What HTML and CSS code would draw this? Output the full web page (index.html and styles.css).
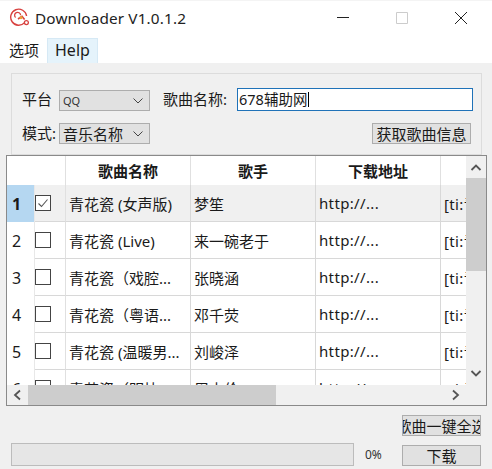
FILE: index.html
```html
<!DOCTYPE html>
<html lang="zh">
<head>
<meta charset="utf-8">
<title>Downloader V1.0.1.2</title>
<link rel="stylesheet" href="styles.css">
</head>
<body>
<div class="window">
  <header class="titlebar">
    <svg class="logo" viewBox="0 0 20 20" width="20" height="20" aria-hidden="true">
      <path d="M15.6 14.6A8 8 0 1 1 17.6 8" fill="none" stroke="#d8413f" stroke-width="1.4"/>
      <path d="M6.6 9.6a3 3 0 1 1 5-2.4" fill="none" stroke="#d8413f" stroke-width="1.3"/>
      <path d="M9 11l4-2.6 2.6 3" fill="none" stroke="#d8413f" stroke-width="1.6"/>
      <circle cx="12" cy="9.6" r="1.6" fill="#e8a23c"/>
      <circle cx="17.4" cy="14.6" r="2" fill="#fff" stroke="#d8413f" stroke-width="1.3"/>
    </svg>
    <span class="title">Downloader V1.0.1.2</span>
    <div class="caption">
      <svg viewBox="0 0 14 14" width="14" height="14" aria-hidden="true"><path d="M1 6.5h12" stroke="#222" fill="none"/></svg>
      <svg viewBox="0 0 14 14" width="14" height="14" aria-hidden="true"><path d="M1.5 1.5h11v11h-11z" stroke="#ccc" fill="none"/></svg>
      <svg viewBox="0 0 14 14" width="14" height="14" aria-hidden="true"><path d="M1 1l12 12M13 1L1 13" stroke="#222" fill="none"/></svg>
    </div>
  </header>
  <nav class="menubar">
    <span class="menu">选项</span>
    <span class="menu menu-hover">Help</span>
  </nav>
  <main class="content">
    <section class="group">
      <div class="form-row">
        <label class="lbl lbl-platform">平台</label>
        <div class="combo combo-small"><span>QQ</span><svg class="chev" viewBox="0 0 10 6" width="10" height="6"><path d="M0.5 0.5L5 5l4.5-4.5" fill="none" stroke="#444"/></svg></div>
        <label class="lbl lbl-song">歌曲名称:</label>
        <div class="input">678辅助网<i class="caret"></i></div>
      </div>
      <div class="form-row form-row-2">
        <label class="lbl lbl-mode">模式:</label>
        <div class="combo"><span class="combo-zh">音乐名称</span><svg class="chev" viewBox="0 0 10 6" width="10" height="6"><path d="M0.5 0.5L5 5l4.5-4.5" fill="none" stroke="#444"/></svg></div>
        <button class="btn btn-info">获取歌曲信息</button>
      </div>
    </section>

    <section class="frame">
      <div class="viewport">
        <table class="grid">
          <colgroup>
            <col class="c-num"><col class="c-chk"><col class="c-col"><col class="c-col"><col class="c-col"><col class="c-col">
          </colgroup>
          <thead>
            <tr><th class="corner"></th><th></th><th>歌曲名称</th><th>歌手</th><th>下载地址</th><th></th></tr>
          </thead>
          <tbody>
            <tr class="current"><td class="num">1</td><td class="chk"><span class="box"><svg viewBox="0 0 14 14" width="14" height="14"><path d="M2.5 7.5l3 3 6-7" fill="none" stroke="#555" stroke-width="1.1"/></svg></span></td><td>青花瓷 (女声版)</td><td>梦笙</td><td class="url">http://...</td><td class="lyric">[ti:青花瓷]</td></tr>
            <tr><td class="num">2</td><td class="chk"><span class="box"></span></td><td>青花瓷 (Live)</td><td>来一碗老于</td><td class="url">http://...</td><td class="lyric">[ti:青花瓷]</td></tr>
            <tr><td class="num">3</td><td class="chk"><span class="box"></span></td><td>青花瓷（戏腔...</td><td>张晓涵</td><td class="url">http://...</td><td class="lyric">[ti:青花瓷]</td></tr>
            <tr><td class="num">4</td><td class="chk"><span class="box"></span></td><td>青花瓷（粤语...</td><td>邓千荧</td><td class="url">http://...</td><td class="lyric">[ti:青花瓷]</td></tr>
            <tr><td class="num">5</td><td class="chk"><span class="box"></span></td><td>青花瓷 (温暖男...</td><td>刘峻泽</td><td class="url">http://...</td><td class="lyric">[ti:青花瓷]</td></tr>
            <tr><td class="num">6</td><td class="chk"><span class="box"></span></td><td>青花瓷（明快...</td><td>周杰伦</td><td class="url">http://...</td><td class="lyric">[ti:青花瓷]</td></tr>
          </tbody>
        </table>
      </div>
      <div class="vbar">
        <svg class="arrow" viewBox="0 0 20 22" width="20" height="22"><path d="M5.5 14L10 9.500l4.500 4.500" fill="none" stroke="#555" stroke-width="1.8"/></svg>
        <div class="vthumb"></div>
        <svg class="arrow arrow-down" viewBox="0 0 20 22" width="20" height="22"><path d="M5.500 8l4.500 4.500 4.500-4.500" fill="none" stroke="#555" stroke-width="1.8"/></svg>
      </div>
      <div class="hbar">
        <svg class="arrow-h" viewBox="0 0 21 20" width="21" height="20"><path d="M13 5.500L8 10l5 4.500" fill="none" stroke="#555" stroke-width="1.800"/></svg>
        <div class="hthumb"></div>
        <svg class="arrow-h arrow-right" viewBox="0 0 21 20" width="21" height="20"><path d="M8 5.500l5 4.500-5 4.500" fill="none" stroke="#555" stroke-width="1.800"/></svg>
      </div>
      <div class="scorner"></div>
    </section>

    <section class="footer">
      <div class="footer-left">
        <div class="progress"></div>
        <span class="pct">0%</span>
      </div>
      <div class="footer-right">
        <button class="btn btn-wide"><span>歌曲一键全选</span></button>
        <button class="btn btn-wide"><span>下载</span></button>
      </div>
    </section>
  </main>
</div>
</body>
</html>
```

FILE: styles.css
```css
* { box-sizing: border-box; }
html, body { margin: 0; padding: 0; }
body {
  width: 492px;
  height: 469px;
  overflow: hidden;
  background: #f0f0f0;
  font-family: "Noto Sans", "Noto Sans CJK SC", sans-serif;
  font-size: 15px;
  color: #1a1a1a;
}
.window { display: flex; flex-direction: column; height: 469px; }

.titlebar {
  height: 33px;
  background: #fff;
  display: flex;
  align-items: center;
  padding: 2px 0 0 9px;
  border-top: 1px solid #f4f4f4;
}
.logo { flex: none; }
.title { margin-left: 6px; font-size: 15.3px; color: #222; letter-spacing: 0.15px; }
.caption { margin-left: auto; display: flex; gap: 45px; padding-right: 24px; }

.menubar {
  height: 30px;
  background: #fff;
  display: flex;
  align-items: stretch;
  padding: 5px 0 0 1px;
}
.menu { padding: 0 8px; line-height: 24px; font-size: 15px; }
.menu-hover { background: #e5f3fb; border: 1px solid #d6e9f5; border-bottom: 0; line-height: 23px; padding: 0 7px; font-size: 16px; }

.content { flex: 1; display: flex; flex-direction: column; }

.group {
  margin: 10px 10px 0 11px;
  height: 82px;
  border: 1px solid #dcdcdc;
  padding: 14px 0 0 10px;
}
.form-row { display: flex; align-items: center; height: 23px; }
.form-row-2 { margin-top: 12px; height: 21px; }
.lbl { font-size: 15px; white-space: nowrap; }
.lbl-platform { width: 37px; padding-bottom: 2px; }
.lbl-mode { width: 37px; padding-bottom: 3px; }
.lbl-song { margin-left: 13px; width: 74px; padding-bottom: 2px; }

.combo {
  width: 91px;
  height: 21px;
  background: #e1e1e1;
  border: 1px solid #adadad;
  display: flex;
  align-items: center;
  justify-content: space-between;
  padding: 0 6px 0 3px;
  font-size: 11px;
  color: #333;
}
.combo-small { margin-top: 2px; }
.combo-zh { font-size: 15px; color: #1a1a1a; padding-bottom: 1px; }
.input {
  width: 236px;
  height: 23px;
  background: #fff;
  border: 1px solid #1f72b8;
  padding-left: 1px;
  line-height: 21px;
  font-size: 14.5px;
  display: flex;
  align-items: center;
}
.caret { display: inline-block; width: 1px; height: 15px; background: #000; margin-left: 1px; }

.btn {
  font: inherit;
  color: #1a1a1a;
  background: #e1e1e1;
  border: 1px solid #adadad;
  padding: 0;
  display: flex;
  align-items: center;
  justify-content: center;
  white-space: nowrap;
  overflow: hidden;
}
.btn-info { width: 99px; height: 21px; margin-left: auto; margin-right: 10px; }
.btn-wide { width: 79px; height: 21px; }
.btn-wide span { flex: none; }

.frame {
  margin: 0 5px 0 6px;
  height: 251px;
  border: 1px solid #8a8a8a;
  background: #fff;
  display: grid;
  grid-template-columns: 459px 20px;
  grid-template-rows: 229px 20px;
}
.viewport { overflow: hidden; }
.grid {
  border-collapse: separate;
  border-spacing: 0;
  table-layout: fixed;
  width: 527px;
  background: #fff;
}
.c-num { width: 28px; }
.c-chk { width: 31px; }
.c-col { width: 125px; }
.grid th {
  height: 29px;
  padding: 0;
  font-size: 15px;
  font-weight: 700;
  background: #fff;
  border-right: 1px solid #e0e0e0;
  text-align: center;
}
.grid th.corner { border-right: 0; }
.grid td {
  height: 37px;
  padding: 0 0 0 3px;
  font-size: 15px;
  white-space: nowrap;
  overflow: hidden;
  border-right: 1px solid #d8d8d8;
  border-bottom: 1px solid #d8d8d8;
}
.grid td.url, .grid td.lyric { letter-spacing: 0.35px; }
.grid td.num {
  padding: 0 8px 0 0;
  text-align: center;
  font-size: 16px;
  border-right: 1px solid #e8e8e8;
  border-bottom: 0;
}
.grid td.chk { padding: 0; border-right-color: #e0e0e0; }
.box {
  display: block;
  width: 16px;
  height: 16px;
  border: 1px solid #444;
  background: #fff;
}
.box svg { display: block; }
.current td { background: #f0f0f0; }
.current td.num { background: #b5d7f1; font-weight: 700; }
.current td.chk { background: #f0f0f0; }

.vbar {
  background: #f0f0f0;
  display: flex;
  flex-direction: column;
}
.arrow { flex: none; display: block; }
.vthumb { height: 93px; background: #cdcdcd; }
.arrow-down { margin-top: auto; }
.hbar {
  background: #f0f0f0;
  display: flex;
}
.arrow-h { flex: none; display: block; }
.hthumb { width: 248px; background: #cdcdcd; }
.arrow-right { margin-left: auto; }
.scorner { background: #f0f0f0; }

.footer {
  flex: 1;
  display: flex;
  justify-content: space-between;
  align-items: flex-end;
  padding: 0 11px 3px 11px;
}
.footer-left { display: flex; align-items: center; }
.progress { width: 343px; height: 23px; background: #e6e6e6; border: 1px solid #bcbcbc; }
.pct { margin-left: 11px; font-size: 12px; color: #333; }
.footer-right { display: flex; flex-direction: column; gap: 9px; }
```
